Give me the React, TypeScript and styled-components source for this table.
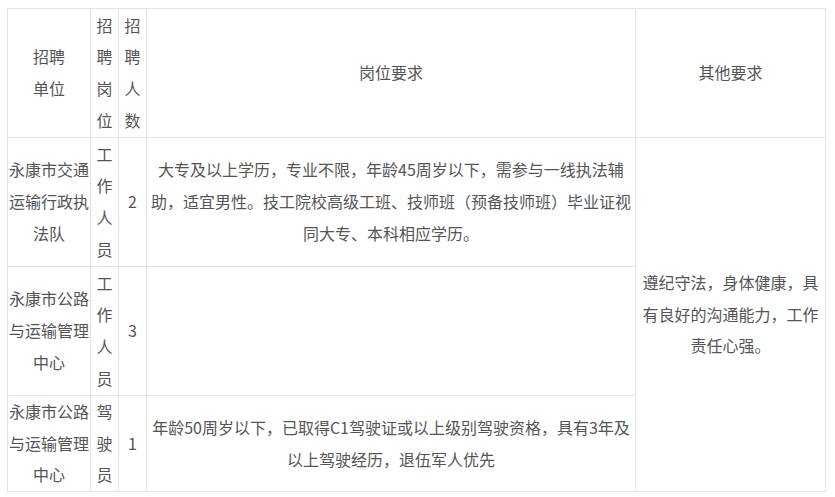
import React from 'react';
import styled, { createGlobalStyle } from 'styled-components';

const GlobalStyle = createGlobalStyle`
  body {
    margin: 0;
    background: #fff;
    font-family: "Noto Sans CJK SC", "Liberation Sans", sans-serif;
  }
`;

const Page = styled.div`
  padding: 8px 0 0 7px;
`;

const Table = styled.div`
  display: grid;
  grid-template-columns: 82px 27px 27px 488px 189px;
  grid-template-rows: 128px 128px 128px 95px;
  gap: 1px;
  padding: 1px;
  width: max-content;
  background: #e3e3e3;
  color: #555;
  font-size: 16px;
  line-height: 31.7px;
`;

const Cell = styled.div<{ $pad?: number; $span?: number }>`
  background: #fff;
  display: flex;
  align-items: center;
  justify-content: center;
  text-align: center;
  padding: 0 ${p => p.$pad ?? 0}px;
  grid-row: ${p => (p.$span ? `span ${p.$span}` : 'auto')};
  word-break: break-all;
  overflow: hidden;
`;

const Para = styled.div`
  width: 100%;
`;

type Row = {
  unit: string;
  post: string;
  count: string;
  req: string;
};

const rows: Row[] = [
  {
    unit: '永康市交通运输行政执法队',
    post: '工作人员',
    count: '2',
    req: '大专及以上学历，专业不限，年龄45周岁以下，需参与一线执法辅助，适宜男性。技工院校高级工班、技师班（预备技师班）毕业证视同大专、本科相应学历。',
  },
  {
    unit: '永康市公路与运输管理中心',
    post: '工作人员',
    count: '3',
    req: '',
  },
  {
    unit: '永康市公路与运输管理中心',
    post: '驾驶员',
    count: '1',
    req: '年龄50周岁以下，已取得C1驾驶证或以上级别驾驶资格，具有3年及以上驾驶经历，退伍军人优先',
  },
];

function App() {
  return (
    <Page>
      <GlobalStyle />
      <Table>
        <Cell>
          <Para>招聘<br />单位</Para>
        </Cell>
        <Cell $pad={5}><Para>招聘岗位</Para></Cell>
        <Cell $pad={5}><Para>招聘人数</Para></Cell>
        <Cell $pad={1}><Para>岗位要求</Para></Cell>
        <Cell $pad={6}><Para>其他要求</Para></Cell>
        {rows.map((r, i) => (
          <React.Fragment key={i}>
            <Cell><Para>{r.unit}</Para></Cell>
            <Cell $pad={5}><Para>{r.post}</Para></Cell>
            <Cell><Para>{r.count}</Para></Cell>
            <Cell $pad={1}><Para>{r.req}</Para></Cell>
            {i === 0 && (
              <Cell $pad={6} $span={3}>
                <Para>遵纪守法，身体健康，具有良好的沟通能力，工作责任心强。</Para>
              </Cell>
            )}
          </React.Fragment>
        ))}
      </Table>
    </Page>
  );
}

export default App;
